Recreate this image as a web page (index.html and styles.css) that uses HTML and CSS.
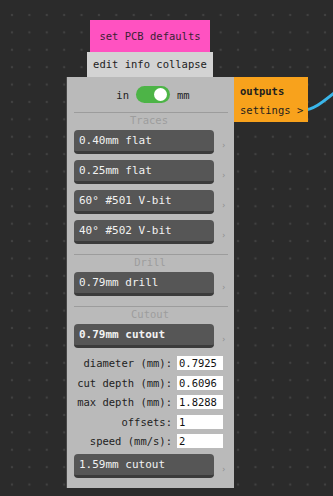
FILE: index.html
```html
<!DOCTYPE html>
<html lang="en">
<head>
    <meta charset="UTF-8">
    <title>PCB node</title>
    <link rel="stylesheet" href="styles.css">
</head>
<body>
    <div class="canvas">
        <svg class="wire" width="40" height="40" viewBox="0 0 40 40">
            <path d="M0 32 C 12 32, 22 22, 40 8" fill="none" stroke="#3ab6ea" stroke-width="3"/>
        </svg>

        <div class="node">
            <div class="tab-pink">set PCB defaults</div>
            <div class="tab-menu">edit info collapse</div>

            <div class="panel">
                <div class="outputs">
                    <div class="out-title">outputs</div>
                    <div>settings &gt;</div>
                </div>

                <div class="units">
                    <span>in</span>
                    <span class="switch"><span class="knob"></span></span>
                    <span>mm</span>
                </div>

                <div class="section">Traces</div>
                <div class="row"><div class="btn">0.40mm flat</div><span class="arrow">›</span></div>
                <div class="row"><div class="btn">0.25mm flat</div><span class="arrow">›</span></div>
                <div class="row"><div class="btn">60° #501 V-bit</div><span class="arrow">›</span></div>
                <div class="row"><div class="btn">40° #502 V-bit</div><span class="arrow">›</span></div>

                <div class="section">Drill</div>
                <div class="row"><div class="btn">0.79mm drill</div><span class="arrow">›</span></div>

                <div class="section">Cutout</div>
                <div class="row"><div class="btn bold">0.79mm cutout</div><span class="arrow">›</span></div>

                <div class="fields">
                    <label>diameter (mm):</label><input type="text" value="0.7925">
                    <label>cut depth (mm):</label><input type="text" value="0.6096">
                    <label>max depth (mm):</label><input type="text" value="1.8288">
                    <label>offsets:</label><input type="text" value="1">
                    <label>speed (mm/s):</label><input type="text" value="2">
                </div>

                <div class="row"><div class="btn">1.59mm cutout</div><span class="arrow">›</span></div>
            </div>
        </div>
    </div>
</body>
</html>
```

FILE: styles.css
```css
body {
    margin: 0;
    font-family: "DejaVu Sans Mono", "Liberation Mono", monospace;
    font-size: 10.5px;
    color: #222;
}
.canvas {
    position: relative;
    width: 333px;
    height: 496px;
    overflow: hidden;
    background-color: #2b2b2b;
    background-image: radial-gradient(circle, #414141 0.9px, transparent 1.6px);
    background-size: 17.4px 17.4px;
    background-position: 3.3px 6.3px;
}
.wire {
    position: absolute;
    left: 303px;
    top: 78px;
}
.node {
    position: absolute;
    left: 66px;
    top: 20px;
    width: 168px;
    display: flex;
    flex-direction: column;
    align-items: center;
}
.tab-pink {
    width: 120px;
    height: 32px;
    line-height: 33px;
    text-align: center;
    background-color: #ff52c1;
    color: #3a2233;
}
.tab-menu {
    width: 126px;
    height: 25px;
    line-height: 25px;
    text-align: center;
    background-color: #d3d3d3;
    color: #222;
}
.panel {
    position: relative;
    box-sizing: border-box;
    width: 168px;
    height: 411px;
    padding: 0 8px 0 7px;
    background-color: #bababa;
    border-left: 1px solid #474747;
}
.outputs {
    position: absolute;
    left: 100%;
    top: 0;
    width: 74px;
    height: 45px;
    box-sizing: border-box;
    padding: 5px 0 0 6px;
    background-color: #f8a21c;
    color: #1e1e1e;
    line-height: 19px;
}
.out-title {
    font-weight: bold;
}
.units {
    height: 35px;
    display: flex;
    align-items: center;
    justify-content: center;
    gap: 7px;
    padding-left: 4px;
    border-bottom: 1px solid #9c9c9c;
    margin-right: -2px;
}
.switch {
    position: relative;
    width: 34px;
    height: 17px;
    border-radius: 9px;
    background-color: #4db447;
}
.knob {
    position: absolute;
    right: 3px;
    top: 2px;
    width: 13px;
    height: 13px;
    border-radius: 50%;
    background-color: #fff;
}
.section {
    height: 16px;
    line-height: 15px;
    text-align: center;
    color: #9d9d9d;
    margin-bottom: 1px;
    padding-right: 2px;
}
.section + .row {
    margin-top: 0;
}
.row {
    display: flex;
    align-items: center;
    margin-top: 6px;
}
.btn {
    box-sizing: border-box;
    width: 142px;
    height: 24px;
    line-height: 21px;
    padding-left: 5px;
    border-radius: 4px;
    background-color: #565656;
    border-bottom: 3px solid #3b3b3b;
    color: #f2f2f2;
    font-size: 11px;
}
.btn.bold {
    font-weight: bold;
}
.arrow {
    margin-left: 7px;
    margin-top: 7px;
    color: #8c8c8c;
    font-size: 8px;
}
.row + .section {
    margin-top: 10px;
    border-top: 1px solid #9c9c9c;
    margin-right: -2px;
    padding-top: 0;
}
.fields {
    display: grid;
    grid-template-columns: 1fr 46px;
    column-gap: 5px;
    row-gap: 5.5px;
    align-items: center;
    margin: 8px 3px 2px 0;
}
.fields label {
    text-align: right;
    color: #222;
}
.fields input {
    box-sizing: border-box;
    width: 46px;
    height: 14px;
    border: none;
    padding: 0 2px;
    margin: 0;
    font-family: inherit;
    font-size: 10.5px;
    background-color: #fff;
    color: #111;
}
```
